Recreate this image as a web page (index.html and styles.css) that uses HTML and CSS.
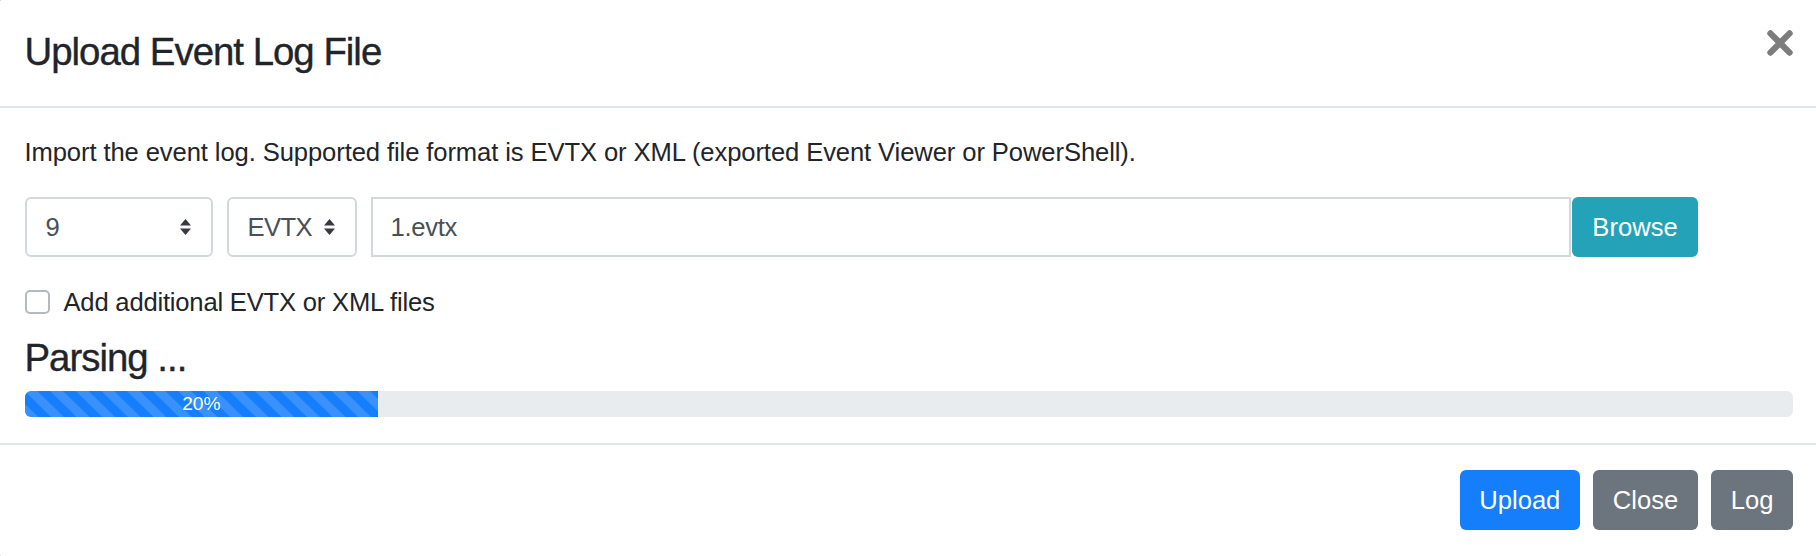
FILE: index.html
```html
<!DOCTYPE html>
<html lang="en">
<head>
<meta charset="utf-8">
<title>Upload Event Log File</title>
<link rel="stylesheet" href="styles.css">
</head>
<body>
<div class="modal">
  <div class="modal-header">
    <h4 class="modal-title">Upload Event Log File</h4>
    <button class="close" type="button" aria-label="Close">
      <svg viewBox="0 0 26 26" width="26" height="26"><path d="M3.4 3.4L22.6 22.6M22.6 3.4L3.4 22.6"/></svg>
    </button>
  </div>
  <div class="modal-body">
    <p class="intro">Import the event log. Supported file format is EVTX or XML (exported Event Viewer or PowerShell).</p>
    <div class="file-row">
      <div class="select select-count">
        <span>9</span>
        <svg viewBox="0 0 4 5" preserveAspectRatio="none"><path d="M2 0L0 2h4zm0 5L0 3h4z"/></svg>
      </div>
      <div class="select select-format">
        <span>EVTX</span>
        <svg viewBox="0 0 4 5" preserveAspectRatio="none"><path d="M2 0L0 2h4zm0 5L0 3h4z"/></svg>
      </div>
      <div class="input-group">
        <div class="file-input">1.evtx</div>
        <button class="btn btn-info" type="button">Browse</button>
      </div>
    </div>
    <label class="check"><span class="check-box"></span><span>Add additional EVTX or XML files</span></label>
    <h4 class="status">Parsing ...</h4>
    <div class="progress"><div class="progress-bar" style="width:20%">20%</div></div>
  </div>
  <div class="modal-footer">
    <button class="btn btn-primary" type="button">Upload</button>
    <button class="btn btn-secondary" type="button">Close</button>
    <button class="btn btn-secondary" type="button">Log</button>
  </div>
</div>
</body>
</html>
```
FILE: styles.css
```css
* { box-sizing: border-box; }
html, body { margin: 0; padding: 0; height: 100%; overflow: hidden; }
body {
  background: #5a5a5a;
  font-family: "Liberation Sans", Arial, sans-serif;
  color: #212529;
  font-size: 25.6px;
  line-height: 38.4px;
}
.modal {
  width: 1822px;
  margin: -2px 0 0 -2px;
  background: #fff;
  border-radius: 8px;
}
.modal-header {
  display: flex;
  align-items: flex-start;
  padding: 24.9px 27px 25.5px 26.5px;
  border-bottom: 2px solid #e2e5e8;
}
.modal-title {
  margin: 0;
  font-size: 38.4px;
  line-height: 57.6px;
  font-weight: 500;
  letter-spacing: -1px;
  -webkit-text-stroke: 0.35px #212529;
}
.close {
  margin: 7.5px 0 0 auto;
  padding: 0;
  border: 0;
  background: none;
  width: 26px;
  height: 26px;
  display: block;
}
.close svg {
  display: block;
  stroke: #7d7d7d;
  stroke-width: 6.2;
  stroke-linecap: round;
  fill: none;
}
.modal-body {
  padding: 24.7px 27px 25.6px 26.5px;
}
.intro {
  margin: 0 0 25.6px;
  letter-spacing: -0.1px;
}
.file-row {
  display: flex;
  height: 60.8px;
  gap: 14px;
  margin-bottom: 25.6px;
}
.select {
  display: flex;
  align-items: center;
  justify-content: space-between;
  height: 60.8px;
  border: 2px solid #d3d8dd;
  border-radius: 6px;
  padding: 0 20px 0 19px;
  color: #495057;
}
.select-count { width: 188px; }
.select-format { width: 130px; letter-spacing: -0.6px; }
.select svg {
  display: block;
  width: 11px;
  height: 16px;
  fill: #343a40;
}
.input-group {
  flex: 1;
  display: flex;
  margin-right: 95px;
}
.file-input {
  flex: 1;
  display: flex;
  align-items: center;
  border: 2px solid #d3d8dd;
  padding: 0 18px;
  color: #495057;
  letter-spacing: -0.3px;
}
.btn {
  font-family: inherit;
  font-size: 25.6px;
  line-height: 38.4px;
  height: 60.8px;
  padding: 0 19.5px;
  border: 0;
  border-radius: 6px;
  color: #fff;
}
.btn-info {
  background: #24a2b8;
  margin-left: 1.3px;
  width: 126px;
}
.btn-primary { background: #157efb; }
.btn-secondary { background: #6c757d; }
.check {
  display: flex;
  align-items: center;
  gap: 14px;
  letter-spacing: -0.2px;
}
.check-box {
  width: 25px;
  height: 24px;
  border: 2px solid #b3b9bf;
  border-radius: 5px;
  background: #fff;
}
.status {
  margin: 14px 0 10px;
  font-size: 38.4px;
  line-height: 46px;
  font-weight: 500;
  letter-spacing: -1px;
  -webkit-text-stroke: 0.35px #212529;
}
.progress {
  display: flex;
  height: 25.6px;
  background: #e9ecef;
  border-radius: 6px;
  overflow: hidden;
}
.progress-bar {
  background-color: #157efb;
  background-image: linear-gradient(45deg, rgba(255,255,255,.15) 25%, transparent 25%, transparent 50%, rgba(255,255,255,.15) 50%, rgba(255,255,255,.15) 75%, transparent 75%, transparent);
  background-size: 25.6px 25.6px;
  color: #fff;
  font-size: 19.2px;
  line-height: 25.6px;
  text-align: center;
}
.modal-footer {
  display: flex;
  justify-content: flex-end;
  gap: 13.5px;
  padding: 25px 27px 27.2px 26.5px;
  border-top: 2px solid #e2e5e8;
}
```
